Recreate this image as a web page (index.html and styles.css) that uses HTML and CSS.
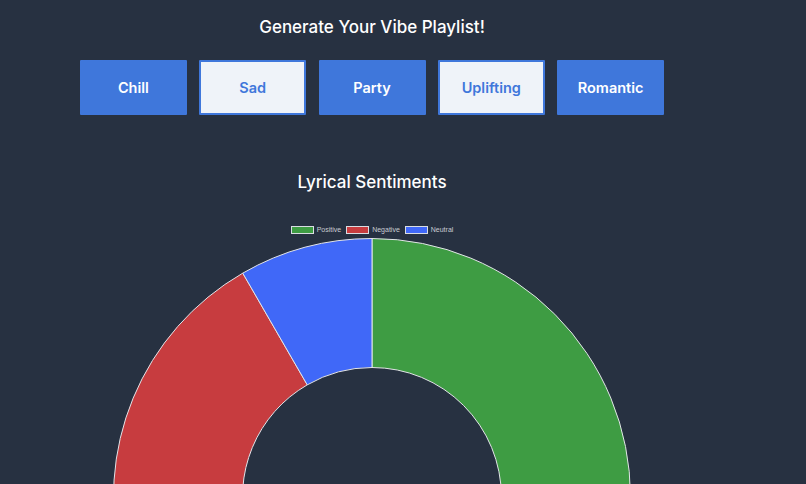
FILE: index.html
```html
<!DOCTYPE html>
<html>
<head>
<meta charset="utf-8">
<link rel="stylesheet" href="styles.css">
</head>
<body>
<main class="page">
  <h1 class="title">Generate Your Vibe Playlist!</h1>
  <div class="moods">
    <button class="mood">Chill</button>
    <button class="mood light">Sad</button>
    <button class="mood">Party</button>
    <button class="mood light">Uplifting</button>
    <button class="mood">Romantic</button>
  </div>
  <h2 class="subtitle">Lyrical Sentiments</h2>
  <div class="legend">
    <span class="item"><span class="swatch pos"></span>Positive</span>
    <span class="item"><span class="swatch neg"></span>Negative</span>
    <span class="item"><span class="swatch neu"></span>Neutral</span>
  </div>
  <svg class="chart" width="520" height="262" viewBox="0 0 520 262">
    <path class="seg" fill="#3e9c43" d="M260 1.5 A258.5 258.5 0 0 1 260 518.5 L260 389.5 A129.5 129.5 0 0 0 260 130.5 Z"/>
    <path class="seg" fill="#c73c3f" d="M260 518.5 A258.5 258.5 0 0 1 130.75 36.13 L195.25 147.85 A129.5 129.5 0 0 0 260 389.5 Z"/>
    <path class="seg" fill="#4068f8" d="M130.75 36.13 A258.5 258.5 0 0 1 260 1.5 L260 130.5 A129.5 129.5 0 0 0 195.25 147.85 Z"/>
  </svg>
</main>
</body>
</html>
```
FILE: styles.css
```css
html, body {
  margin: 0;
  padding: 0;
  background: #273141;
  overflow: hidden;
}
.page {
  width: 744px;
  display: flex;
  flex-direction: column;
  align-items: center;
  font-family: "Inter", "Noto Sans", sans-serif;
  color: #ffffff;
}
.title {
  margin: 15px 0 0;
  font-size: 17px;
  line-height: 24px;
  font-weight: 500;
}
.moods {
  margin-top: 21px;
  display: flex;
  gap: 12.3px;
}
.mood {
  width: 107px;
  height: 55px;
  box-sizing: border-box;
  border: 2px solid #3f77db;
  border-radius: 1px;
  background: #3f77db;
  color: #ffffff;
  font-family: "Inter", "Noto Sans", sans-serif;
  font-size: 14.5px;
  font-weight: 600;
  padding: 0;
}
.mood.light {
  background: #eff3f9;
  color: #3f77db;
}
.subtitle {
  margin: 55px 0 0;
  font-size: 17px;
  line-height: 24px;
  font-weight: 500;
}
.legend {
  margin-top: 31px;
  display: flex;
  gap: 5px;
  height: 9px;
  align-items: center;
  font-family: "Liberation Sans", Arial, sans-serif;
  font-size: 7px;
  color: #c8ccd2;
}
.item {
  display: flex;
  align-items: center;
  gap: 3px;
}
.swatch {
  width: 21px;
  height: 6px;
  border: 1px solid #d9dde2;
}
.swatch.pos { background: #3e9c43; }
.swatch.neg { background: #c73c3f; }
.swatch.neu { background: #4068f8; }
.chart {
  margin-top: 3px;
  display: block;
}
.seg {
  stroke: #e2e4e8;
  stroke-width: 1;
}
```
